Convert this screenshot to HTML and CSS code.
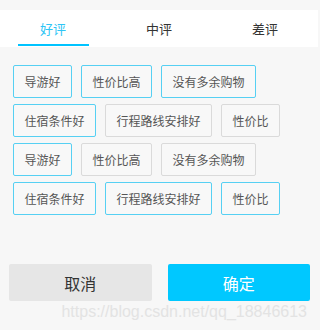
FILE: index.html
```html
<!DOCTYPE html>
<html lang="zh-CN">
<head>
<meta charset="utf-8">
<title>评价</title>
<link rel="stylesheet" href="styles.css">
</head>
<body>
<div class="page">
  <div class="tabs">
    <div class="tab active"><span class="tab-label">好评</span><span class="tab-bar"></span></div>
    <div class="tab"><span class="tab-label">中评</span><span class="tab-bar"></span></div>
    <div class="tab"><span class="tab-label">差评</span><span class="tab-bar"></span></div>
  </div>
  <div class="tags">
    <span class="tag on">导游好</span>
    <span class="tag on">性价比高</span>
    <span class="tag on">没有多余购物</span>
    <span class="tag on">住宿条件好</span>
    <span class="tag">行程路线安排好</span>
    <span class="tag">性价比</span>
    <span class="tag on">导游好</span>
    <span class="tag">性价比高</span>
    <span class="tag">没有多余购物</span>
    <span class="tag on">住宿条件好</span>
    <span class="tag on">行程路线安排好</span>
    <span class="tag on">性价比</span>
  </div>
  <div class="actions">
    <button class="btn cancel">取消</button>
    <button class="btn ok">确定</button>
  </div>
  <div class="watermark">https://blog.csdn.net/qq_18846613</div>
</div>
</body>
</html>
```
FILE: styles.css
```css
html, body {
  margin: 0;
  padding: 0;
  background: #f7f7f7;
}
.page {
  width: 318px;
  height: 330px;
  overflow: hidden;
  font-family: "Noto Sans CJK SC", "Noto Sans", sans-serif;
  padding-top: 10px;
  box-sizing: border-box;
}
.tabs {
  display: flex;
  background: #fff;
  height: 37px;
}
.tab {
  flex: 1;
  display: flex;
  flex-direction: column;
  align-items: center;
}
.tab-label {
  margin-top: 10px;
  font-size: 13px;
  line-height: 17px;
  color: #333;
}
.tab-bar {
  margin-top: auto;
  margin-bottom: 1px;
  width: 71px;
  height: 2px;
}
.tab.active .tab-label {
  color: #2ec5f5;
}
.tab.active .tab-bar {
  background: #00c3ff;
}
.tags {
  display: flex;
  flex-wrap: wrap;
  column-gap: 9px;
  row-gap: 6px;
  padding: 18px 10px 0 13px;
}
.tag {
  display: block;
  height: 31px;
  line-height: 31px;
  padding: 0 10.5px;
  font-size: 12px;
  color: #555;
  background: #f8f8f8;
  border: 1px solid #dadada;
  border-radius: 2px;
  white-space: nowrap;
}
.tag.on {
  border-color: #56d0f3;
}
.actions {
  display: flex;
  gap: 16px;
  padding: 0 8px 0 9px;
  margin-top: 49px;
}
.btn {
  flex: 1;
  height: 37px;
  border: none;
  border-radius: 2px;
  font-family: "Noto Sans CJK SC", "Noto Sans", sans-serif;
  font-size: 16px;
  padding: 0;
}
.cancel {
  background: #e6e6e6;
  color: #333;
}
.ok {
  background: #00c8ff;
  color: #fff;
}
.watermark {
  margin-top: 2px;
  padding-right: 11px;
  text-align: right;
  font-family: "Liberation Sans", Arial, sans-serif;
  font-size: 16px;
  line-height: 18px;
  color: #e3e3e3;
}
```
